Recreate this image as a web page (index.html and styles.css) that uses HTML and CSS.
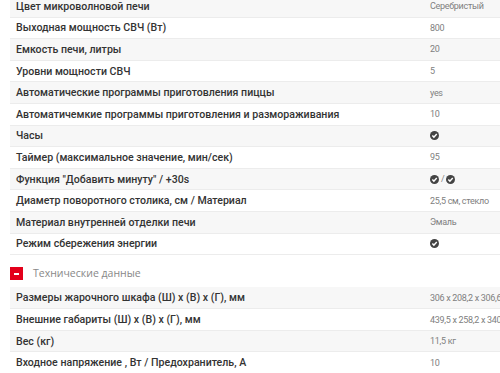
FILE: index.html
```html
<!DOCTYPE html>
<html lang="ru">
<head>
<meta charset="utf-8">
<link rel="stylesheet" href="styles.css">
</head>
<body>
<div class="specs">
  <table class="spec-table first">
    <tr><td class="k">Цвет микроволновой печи</td><td class="v">Серебристый</td></tr>
    <tr><td class="k">Выходная мощность СВЧ (Вт)</td><td class="v">800</td></tr>
    <tr><td class="k">Емкость печи, литры</td><td class="v">20</td></tr>
    <tr><td class="k">Уровни мощности СВЧ</td><td class="v">5</td></tr>
    <tr><td class="k">Автоматические программы приготовления пиццы</td><td class="v">yes</td></tr>
    <tr><td class="k">Автоматичемкие программы приготовления и размораживания</td><td class="v">10</td></tr>
    <tr><td class="k">Часы</td><td class="v"><span class="ok"><svg viewBox="0 0 10 10"><circle cx="5" cy="5" r="5" fill="#444"/><path d="M2.6 5.1 L4.3 6.8 L7.5 3.4" fill="none" stroke="#fff" stroke-width="1.6"/></svg></span></td></tr>
    <tr><td class="k">Таймер (максимальное значение, мин/сек)</td><td class="v">95</td></tr>
    <tr><td class="k">Функция "Добавить минуту" / +30s</td><td class="v"><span class="ok"><svg viewBox="0 0 10 10"><circle cx="5" cy="5" r="5" fill="#444"/><path d="M2.6 5.1 L4.3 6.8 L7.5 3.4" fill="none" stroke="#fff" stroke-width="1.6"/></svg></span> / <span class="ok"><svg viewBox="0 0 10 10"><circle cx="5" cy="5" r="5" fill="#444"/><path d="M2.6 5.1 L4.3 6.8 L7.5 3.4" fill="none" stroke="#fff" stroke-width="1.6"/></svg></span></td></tr>
    <tr><td class="k">Диаметр поворотного столика, см / Материал</td><td class="v">25,5 см, стекло</td></tr>
    <tr><td class="k">Материал внутренней отделки печи</td><td class="v">Эмаль</td></tr>
    <tr><td class="k">Режим сбережения энергии</td><td class="v"><span class="ok"><svg viewBox="0 0 10 10"><circle cx="5" cy="5" r="5" fill="#444"/><path d="M2.6 5.1 L4.3 6.8 L7.5 3.4" fill="none" stroke="#fff" stroke-width="1.6"/></svg></span></td></tr>
  </table>
  <div class="section">
    <span class="toggle"><span class="dash"></span></span>
    <span class="section-title">Технические данные</span>
  </div>
  <table class="spec-table">
    <tr><td class="k">Размеры жарочного шкафа (Ш) x (В) x (Г), мм</td><td class="v">306 x 208,2 x 306,6</td></tr>
    <tr><td class="k">Внешние габариты (Ш) x (В) x (Г), мм</td><td class="v">439,5 x 258,2 x 340</td></tr>
    <tr><td class="k">Вес (кг)</td><td class="v">11,5 кг</td></tr>
    <tr><td class="k">Входное напряжение , Вт / Предохранитель, А</td><td class="v">10</td></tr>
  </table>
</div>
</body>
</html>
```
FILE: styles.css
```css
html, body { margin: 0; padding: 0; background: #fff; }
body { width: 500px; height: 373px; overflow: hidden; }
.specs { padding-left: 10px; margin-top: -4.5px; }
.spec-table { width: 490px; border-collapse: collapse; table-layout: fixed; }
.spec-table tr { height: 21.6px; }
.spec-table tr:nth-child(odd) { background: #f7f7f7; }
.spec-table td { border-bottom: 1px solid #ececec; padding: 0 6px; vertical-align: middle; white-space: nowrap; }
.k { width: 402px; font-family: Roboto, "Noto Sans", sans-serif; font-weight: 500; font-size: 10.6px; color: #333; overflow: hidden; }
.v { font-family: Roboto, "Noto Sans", sans-serif; font-size: 9px; letter-spacing: -0.3px; color: #808080; padding-right: 0 !important; }
.ok { display: inline-block; width: 9px; height: 9px; vertical-align: -1.5px; }
.ok svg { display: block; width: 9px; height: 9px; }
.section { height: 32px; box-sizing: border-box; padding-top: 12px; display: flex; align-items: flex-start; gap: 10px; }
.toggle { width: 13px; height: 13px; background: #e3001b; display: flex; align-items: center; justify-content: center; }
.dash { width: 5px; height: 2px; background: #fff; }
.section-title { font-family: "Open Sans", "Noto Sans", sans-serif; font-size: 10.5px; line-height: 13px; color: #888; }
```
